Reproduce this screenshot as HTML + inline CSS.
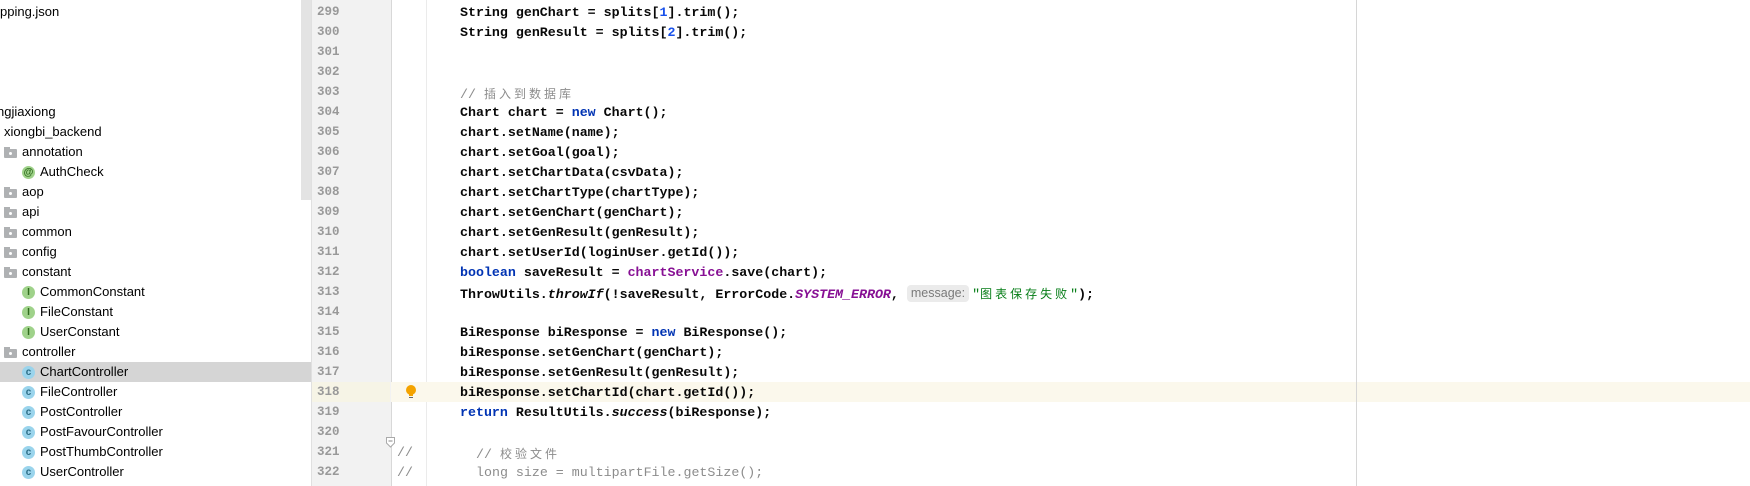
<!DOCTYPE html>
<html><head><meta charset="utf-8"><style>
html,body{margin:0;padding:0;background:#fff;width:1750px;height:486px;overflow:hidden;position:relative}
.t{position:absolute;left:0;height:20px;line-height:20px;font:13px "Liberation Sans","Noto Sans CJK SC",sans-serif;color:#000;white-space:nowrap}
.t>span:last-child{margin-top:2px}
.fold{position:absolute;left:4px;top:7px;width:13px;height:9px;background:#afb1b3;border-radius:1px}
.fold:before{content:"";position:absolute;left:0;top:-2px;width:6px;height:3px;background:#afb1b3}
.fold:after{content:"";position:absolute;left:5px;top:3px;width:3px;height:3px;background:#fff;border-radius:50%}
.cir{position:absolute;left:22px;top:4px;width:13px;height:13px;border-radius:50%;font:bold 10px "Liberation Sans",sans-serif;line-height:13px;text-align:center}
.cc{background:#9ad4ec;color:#2d6e87}
.ci{background:#9fd28a;color:#2f6b1d}
.n{position:absolute;left:317px;height:20px;line-height:20px;margin-top:3px;font:bold 12.5px "Liberation Mono",monospace;color:#999}
.c{position:absolute;left:460px;height:20px;line-height:20px;margin-top:3px;font:bold 13.3px "Liberation Mono","Noto Sans CJK SC",monospace;color:#080808;white-space:pre}
.k{color:#0033b3}.f{color:#871094}.num{color:#1750eb}.i{font-style:italic}.s{color:#067d17;font-weight:normal}
.cm{color:#8c8c8c;font-weight:normal}
.cj{font-family:"Noto Sans CJK SC",sans-serif;font-size:12px;letter-spacing:3px;font-weight:normal}
.hint{display:inline-block;background:#ebebeb;color:#7a7a7a;font:12.5px "Liberation Sans",sans-serif;line-height:17px;padding:0 4px;border-radius:4px;margin-right:3px;vertical-align:1px}
</style></head><body>
<div style="position:absolute;left:0;top:362px;width:311px;height:20px;background:#d5d5d5"></div>
<div style="position:absolute;left:301px;top:0;width:10px;height:200px;background:#e3e3e3"></div>
<div style="position:absolute;left:311px;top:0;width:79px;height:486px;background:#f2f2f2;border-left:1px solid #e0e0e0;border-right:1px solid #d8d8d8"></div>
<div style="position:absolute;left:426px;top:0;width:1px;height:486px;background:#ebebeb"></div>
<div style="position:absolute;left:1356px;top:0;width:1px;height:486px;background:#d6d6d6"></div>
<div style="position:absolute;left:312px;top:382px;width:78px;height:20px;background:#f6f4e6"></div>
<div style="position:absolute;left:391px;top:382px;width:1359px;height:20px;background:#fbf8ec"></div>
<div style="position:absolute;left:1356px;top:382px;width:1px;height:20px;background:#d6d6d6"></div>
<svg style="position:absolute;left:404px;top:384px" width="14" height="16"><circle cx="7" cy="6" r="5" fill="#f4a300"/><rect x="5" y="10" width="4" height="2" fill="#f4a300"/><rect x="5" y="13" width="4" height="1" fill="#666"/></svg>
<svg style="position:absolute;left:386px;top:437px" width="10" height="12"><path d="M0.5 0.5H8.5V6L4.5 10L0.5 6Z" fill="#fff" stroke="#aaa"/><path d="M2.5 4H6.5" stroke="#888"/></svg>

<div class="t" style="top:4px">pping.json</div>
<div class="t" style="top:104px;left:-3px">ngjiaxiong</div>
<div class="t" style="top:124px;left:4px">xiongbi_backend</div>
<div class="t" style="top:142px"><span class="fold"></span><span style="position:absolute;left:22px">annotation</span></div>
<div class="t" style="top:162px"><span class="cir ci">@</span><span style="position:absolute;left:40px">AuthCheck</span></div>
<div class="t" style="top:182px"><span class="fold"></span><span style="position:absolute;left:22px">aop</span></div>
<div class="t" style="top:202px"><span class="fold"></span><span style="position:absolute;left:22px">api</span></div>
<div class="t" style="top:222px"><span class="fold"></span><span style="position:absolute;left:22px">common</span></div>
<div class="t" style="top:242px"><span class="fold"></span><span style="position:absolute;left:22px">config</span></div>
<div class="t" style="top:262px"><span class="fold"></span><span style="position:absolute;left:22px">constant</span></div>
<div class="t" style="top:282px"><span class="cir ci">I</span><span style="position:absolute;left:40px">CommonConstant</span></div>
<div class="t" style="top:302px"><span class="cir ci">I</span><span style="position:absolute;left:40px">FileConstant</span></div>
<div class="t" style="top:322px"><span class="cir ci">I</span><span style="position:absolute;left:40px">UserConstant</span></div>
<div class="t" style="top:342px"><span class="fold"></span><span style="position:absolute;left:22px">controller</span></div>
<div class="t" style="top:362px"><span class="cir cc">c</span><span style="position:absolute;left:40px">ChartController</span></div>
<div class="t" style="top:382px"><span class="cir cc">c</span><span style="position:absolute;left:40px">FileController</span></div>
<div class="t" style="top:402px"><span class="cir cc">c</span><span style="position:absolute;left:40px">PostController</span></div>
<div class="t" style="top:422px"><span class="cir cc">c</span><span style="position:absolute;left:40px">PostFavourController</span></div>
<div class="t" style="top:442px"><span class="cir cc">c</span><span style="position:absolute;left:40px">PostThumbController</span></div>
<div class="t" style="top:462px"><span class="cir cc">c</span><span style="position:absolute;left:40px">UserController</span></div>

<div class="n" style="top:2px">299</div><div class="n" style="top:22px">300</div><div class="n" style="top:42px">301</div><div class="n" style="top:62px">302</div><div class="n" style="top:82px">303</div><div class="n" style="top:102px">304</div><div class="n" style="top:122px">305</div><div class="n" style="top:142px">306</div><div class="n" style="top:162px">307</div><div class="n" style="top:182px">308</div><div class="n" style="top:202px">309</div><div class="n" style="top:222px">310</div><div class="n" style="top:242px">311</div><div class="n" style="top:262px">312</div><div class="n" style="top:282px">313</div><div class="n" style="top:302px">314</div><div class="n" style="top:322px">315</div><div class="n" style="top:342px">316</div><div class="n" style="top:362px">317</div><div class="n" style="top:382px">318</div><div class="n" style="top:402px">319</div><div class="n" style="top:422px">320</div><div class="n" style="top:442px">321</div><div class="n" style="top:462px">322</div><div class="n" style="top:482px">323</div>

<div class="c" style="top:2px">String genChart = splits[<span class="num">1</span>].trim();</div>
<div class="c" style="top:22px">String genResult = splits[<span class="num">2</span>].trim();</div>
<div class="c" style="top:82px"><span class="cm">// <span class="cj">插入到数据库</span></span></div>
<div class="c" style="top:102px">Chart chart = <span class="k">new</span> Chart();</div>
<div class="c" style="top:122px">chart.setName(name);</div>
<div class="c" style="top:142px">chart.setGoal(goal);</div>
<div class="c" style="top:162px">chart.setChartData(csvData);</div>
<div class="c" style="top:182px">chart.setChartType(chartType);</div>
<div class="c" style="top:202px">chart.setGenChart(genChart);</div>
<div class="c" style="top:222px">chart.setGenResult(genResult);</div>
<div class="c" style="top:242px">chart.setUserId(loginUser.getId());</div>
<div class="c" style="top:262px"><span class="k">boolean</span> saveResult = <span class="f">chartService</span>.save(chart);</div>
<div class="c" style="top:282px">ThrowUtils.<span class="i">throwIf</span>(!saveResult, ErrorCode.<span class="f i">SYSTEM_ERROR</span>, <span class="hint">message:</span><span class="s">"<span class="cj">图表保存失败</span>"</span>);</div>
<div class="c" style="top:322px">BiResponse biResponse = <span class="k">new</span> BiResponse();</div>
<div class="c" style="top:342px">biResponse.setGenChart(genChart);</div>
<div class="c" style="top:362px">biResponse.setGenResult(genResult);</div>
<div class="c" style="top:382px">biResponse.setChartId(chart.getId());</div>
<div class="c" style="top:402px"><span class="k">return</span> ResultUtils.<span class="i">success</span>(biResponse);</div>
<div class="c cm" style="top:442px;left:397px">//</div>
<div class="c cm" style="top:442px;left:476px">// <span class="cj">校验文件</span></div>
<div class="c cm" style="top:462px;left:397px">//</div>
<div class="c cm" style="top:462px;left:476px">long size = multipartFile.getSize();</div>
<div class="c cm" style="top:482px;left:397px">//</div>
<div class="c cm" style="top:482px;left:476px">String originalFilename = multipartFile.getOriginalFilename();</div>
</body></html>
